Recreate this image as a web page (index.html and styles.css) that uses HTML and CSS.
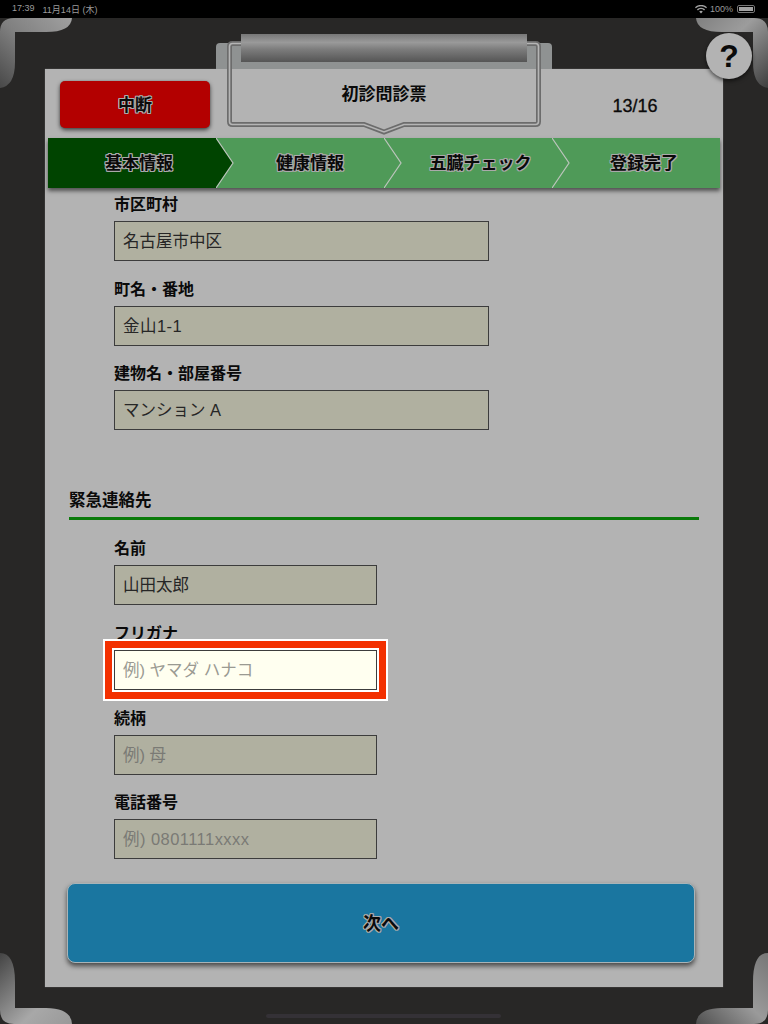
FILE: index.html
```html
<!DOCTYPE html>
<html lang="ja">
<head>
<meta charset="utf-8">
<title>初診問診票</title>
<link rel="stylesheet" href="styles.css">
</head>
<body>
<div class="status">
  <div class="status-left"><span>17:39</span><span>11月14日 (木)</span></div>
  <div class="status-right">
    <svg class="wifi" width="12" height="9" viewBox="0 0 12 9"><path d="M6 8.6 4.2 6.6a2.6 2.6 0 0 1 3.6 0zM2.9 5.4 1.9 4.3a6 6 0 0 1 8.200 0l-1 1.100a4.500 4.500 0 0 0-6.200 0zM.8 3.200 0 2.200a8.800 8.800 0 0 1 12 0l-.8 1a7.600 7.600 0 0 0-10.400 0z" fill="#a3a3a3"/></svg>
    <span>100%</span>
    <span class="battery"><span class="battery-fill"></span></span>
  </div>
</div>

<main class="board">
  <svg class="corner corner-tl" width="72" height="72" viewBox="0 0 72 72"><defs><linearGradient id="gtl" x1="1" y1="0" x2="0" y2="1"><stop offset="0" stop-color="#a0a0a0"/><stop offset=".5" stop-color="#808080"/><stop offset="1" stop-color="#484848"/></linearGradient></defs><path d="M0 14Q0 0 14 0H72Q71 14 46 14H15V44Q15 68 0 70Z" fill="url(#gtl)"/></svg>
  <svg class="corner corner-tr" width="72" height="72" viewBox="0 0 72 72"><defs><linearGradient id="gtr" x1="0" y1="0" x2="1" y2="1"><stop offset="0" stop-color="#808080"/><stop offset=".4" stop-color="#9c9c9c"/><stop offset="1" stop-color="#3e3e3e"/></linearGradient></defs><path d="M72 14Q72 0 58 0H0Q1 14 26 14H57V44Q57 68 72 70Z" fill="url(#gtr)"/></svg>
  <svg class="corner corner-bl" width="72" height="72" viewBox="0 0 72 72"><defs><linearGradient id="gbl" x1="0" y1="0" x2="1" y2="1"><stop offset="0" stop-color="#444"/><stop offset=".65" stop-color="#a8a8a8"/><stop offset="1" stop-color="#999"/></linearGradient></defs><path d="M0 1Q15 1 15 30V56H46Q71 56 72 72H14Q0 72 0 58Z" fill="url(#gbl)"/></svg>
  <svg class="corner corner-br" width="72" height="72" viewBox="0 0 72 72"><defs><linearGradient id="gbr" x1="1" y1="0" x2="0" y2="1"><stop offset="0" stop-color="#777"/><stop offset=".5" stop-color="#9a9a9a"/><stop offset="1" stop-color="#505050"/></linearGradient></defs><path d="M72 1Q57 1 57 30V56H26Q1 56 0 72H58Q72 72 72 58Z" fill="url(#gbr)"/></svg>

  <section class="paper">
    <div class="clip-back"></div>
    <header class="paper-head">
      <button class="stop-btn outlined">中断</button>
      <div class="title-box">
        <svg class="title-frame" width="314" height="95" viewBox="0 0 314 95"><path d="M5.500 2.500H308.500Q311.500 2.500 311.500 5.500V80.500Q311.500 83.500 308.500 83.500H177L157 91 137 83.500H5.500Q2.500 83.500 2.500 80.500V5.500Q2.500 2.500 5.500 2.500Z" fill="none" stroke="#6c6c6c" stroke-width="5"/><path d="M5.500 2.500H308.500Q311.500 2.500 311.500 5.500V80.500Q311.500 83.500 308.500 83.500H177L157 91 137 83.500H5.500Q2.500 83.500 2.500 80.500V5.500Q2.500 2.500 5.500 2.500Z" fill="none" stroke="#b5b5b5" stroke-width="1.600"/></svg>
        <div class="clip-bar"></div>
        <h1 class="title">初診問診票</h1>
      </div>
      <div class="counter">13/16</div>
    </header>

    <nav class="steps">
      <div class="step step-one step-active outlined">基本情報<svg class="chev" width="18" height="50" viewBox="0 0 18 50"><path d="M0 0 17 25 0 50Z" fill="#004400"/><path d="M0 0 17 25 0 50" fill="none" stroke="#bcc4bc" stroke-width="1.200"/></svg></div>
      <div class="step step-two outlined">健康情報<svg class="chev" width="18" height="50" viewBox="0 0 18 50"><path d="M0 0 17 25 0 50Z" fill="#4f9a58"/><path d="M0 0 17 25 0 50" fill="none" stroke="#bcc4bc" stroke-width="1.200"/></svg></div>
      <div class="step step-three outlined">五臓チェック<svg class="chev" width="18" height="50" viewBox="0 0 18 50"><path d="M0 0 17 25 0 50Z" fill="#4f9a58"/><path d="M0 0 17 25 0 50" fill="none" stroke="#bcc4bc" stroke-width="1.200"/></svg></div>
      <div class="step outlined">登録完了</div>
    </nav>

    <div class="form">
      <div class="field"><div class="label">市区町村</div><div class="input wide">名古屋市中区</div></div>
      <div class="field"><div class="label">町名・番地</div><div class="input wide latin">金山1-1</div></div>
      <div class="field"><div class="label">建物名・部屋番号</div><div class="input wide">マンション A</div></div>

      <h2 class="section">緊急連絡先</h2>

      <div class="field"><div class="label">名前</div><div class="input">山田太郎</div></div>
      <div class="field"><div class="label">フリガナ</div><div class="input focus placeholder">例) ヤマダ ハナコ</div></div>
      <div class="field"><div class="label">続柄</div><div class="input placeholder">例) 母</div></div>
      <div class="field"><div class="label">電話番号</div><div class="input placeholder latin">例) 0801111xxxx</div></div>
    </div>

    <button class="next-btn outlined">次へ</button>
  </section>

  <button class="help-btn">?</button>
  <div class="home-bar"></div>
</main>
</body>
</html>
```
FILE: styles.css
```css
* { box-sizing: border-box; }
html, body { margin: 0; height: 100%; }
body {
  display: flex;
  flex-direction: column;
  height: 1024px;
  overflow: hidden;
  background: #282726;
  color: #0a0a0a;
  font-family: "Liberation Sans", "Noto Sans CJK JP", sans-serif;
}
button { font-family: inherit; color: inherit; border: 0; padding: 0; }

.status {
  flex: 0 0 18px;
  display: flex;
  justify-content: space-between;
  align-items: center;
  padding: 0 13px 0 12px;
  background: #000;
  color: #9a9a9a;
  font-size: 9px;
}
.status-left { display: flex; gap: 8px; }
.status-right { display: flex; align-items: center; gap: 3px; }
.battery {
  display: block;
  width: 18px;
  height: 8px;
  margin-left: 1px;
  padding: 1px;
  border: 1px solid #777;
  border-radius: 2px;
}
.battery-fill { display: block; height: 100%; background: #a3a3a3; }

.board {
  position: relative;
  flex: 1;
  display: flex;
  padding: 51px 45px 37px;
}
.corner { position: absolute; }
.corner-tl { left: 0; top: 0; }
.corner-tr { right: 0; top: 0; }
.corner-bl { left: 0; bottom: 0; }
.corner-br { right: 0; bottom: 0; }

.paper {
  position: relative;
  flex: 1;
  display: flex;
  flex-direction: column;
  padding-bottom: 24px;
  background: #b3b3b3;
  box-shadow: 0 0 1px #777;
}
.clip-back {
  position: absolute;
  left: 171px;
  top: -26px;
  width: 336px;
  height: 26px;
  border-radius: 4px 4px 0 0;
  background: #8f9292;
}

.paper-head {
  flex: 0 0 69px;
  display: flex;
  align-items: flex-start;
  padding: 12px 0 0 15px;
}
.stop-btn {
  flex: 0 0 150px;
  height: 47px;
  padding-bottom: 2px;
  border-radius: 5px;
  background: #b30000;
  box-shadow: 0 2px 4px rgba(0, 0, 0, .65), 0 0 1px #888;
  font-size: 17px;
  font-weight: 700;
}
.outlined {
  text-shadow: 1px 0 #aaa, -1px 0 #aaa, 0 1px #aaa, 0 -1px #aaa, 1px 1px #aaa, -1px 1px #aaa, 1px -1px #aaa, -1px -1px #aaa;
}
.title-box { position: relative; flex: 1; }
.title-frame { position: absolute; left: 17px; top: -40px; }
.clip-bar {
  position: absolute;
  left: 31px;
  top: -47px;
  width: 286px;
  height: 28px;
  background: linear-gradient(#777 0, #9a9a9a 30%, #7c7c7c 55%, #555 100%);
}
.title {
  position: absolute;
  left: 17px;
  top: 1px;
  width: 314px;
  margin: 0;
  text-align: center;
  font-size: 17px;
  font-weight: 700;
  line-height: 26px;
}
.counter {
  flex: 0 0 110px;
  margin-right: 33px;
  padding-top: 13px;
  font-size: 18px;
  line-height: 24px;
  -webkit-text-stroke: .3px #0a0a0a;
  text-align: center;
}

.steps {
  flex: 0 0 50px;
  display: grid;
  grid-template-columns: repeat(4, 168px);
  margin: 0 3px;
  background: #4f9a58;
  box-shadow: 0 3px 4px rgba(0, 0, 0, .55);
  position: relative;
  z-index: 2;
}
.step {
  position: relative;
  display: flex;
  align-items: center;
  justify-content: center;
  padding: 0 0 3px 16px;
  font-size: 17px;
  font-weight: 700;
}
.step-one { padding-left: 14px; }
.step-two { padding-left: 20px; }
.step-three { padding-left: 25px; }
.step-active { background: #004400; }
.chev { position: absolute; left: 100%; top: 0; z-index: 1; }

.form {
  flex: 1;
  overflow: hidden;
  padding: 4px 24px 0;
}
.field { margin: 0 0 15.700px 45px; }
.label {
  height: 24px;
  margin-bottom: 5px;
  font-size: 16px;
  font-weight: 700;
  line-height: 26px;
}
.input {
  width: 263px;
  height: 40px;
  padding: 0 8px;
  border: 1px solid #3c3c3c;
  background: #b0b0a0;
  color: #262626;
  font-size: 16.500px;
  line-height: 39px;
}
.wide { width: 375px; }
.latin { letter-spacing: .45px; }
.placeholder { color: #7a7a75; }
.focus {
  position: relative;
  background: #fffff0;
  color: #9a9a92;
  box-shadow: 0 0 0 2px #fff, 0 0 0 9px #f33000, 0 0 0 11px #fff;
}
.section {
  height: 31px;
  margin: 59px 0 16px;
  border-bottom: 3px solid #0a7a0a;
  font-size: 16.500px;
  font-weight: 700;
  line-height: 22px;
}

.next-btn {
  flex: 0 0 80px;
  margin: 0 28px 0 22px;
  padding-bottom: 2px;
  border: 1px solid #a8b4b8;
  border-radius: 8px;
  background: #1a76a0;
  box-shadow: 0 3px 5px rgba(0, 0, 0, .6);
  font-size: 18px;
  font-weight: 700;
}

.help-btn {
  position: absolute;
  left: 706px;
  top: 15px;
  width: 46px;
  height: 46px;
  border-radius: 50%;
  background: #b3b3b3;
  box-shadow: 0 2px 4px rgba(0, 0, 0, .6);
  font-size: 32px;
  font-weight: 700;
  line-height: 46px;
}
.home-bar {
  position: absolute;
  left: 266px;
  bottom: 6px;
  width: 235px;
  height: 4px;
  border-radius: 2px;
  background: #343136;
}
```
